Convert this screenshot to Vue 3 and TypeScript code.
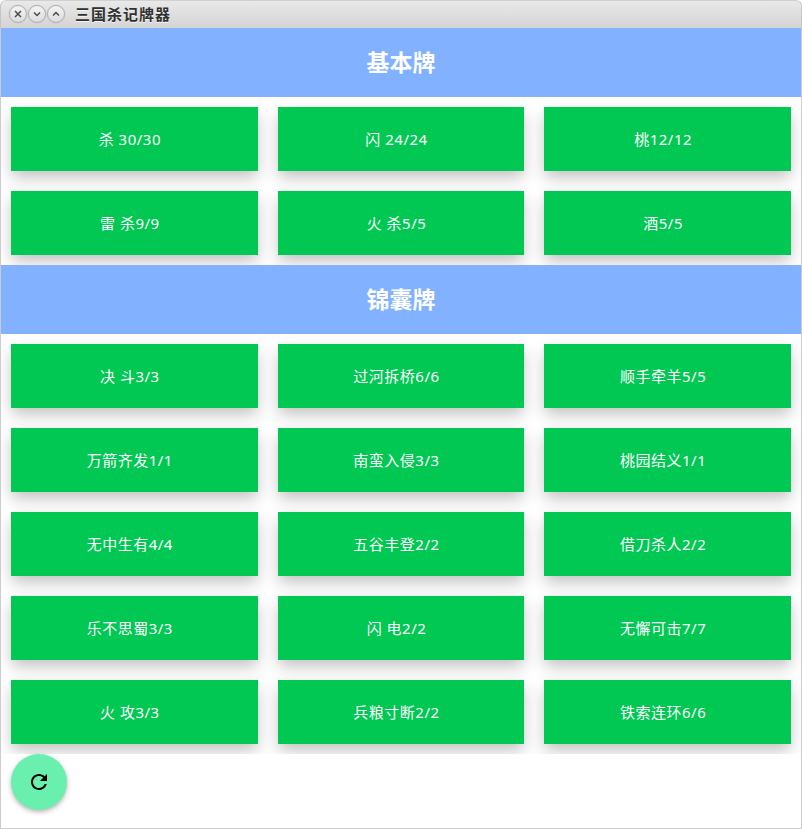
<script setup lang="ts">
import { ref } from 'vue'

interface Card {
  name: string
  total: number
  left: number
}

interface Section {
  title: string
  cards: Card[]
}

const deck: [string, [string, number][]][] = [
  ['基本牌', [['杀 ', 30], ['闪 ', 24], ['桃', 12], ['雷 杀', 9], ['火 杀', 5], ['酒', 5]]],
  ['锦囊牌', [
    ['决 斗', 3], ['过河拆桥', 6], ['顺手牵羊', 5],
    ['万箭齐发', 1], ['南蛮入侵', 3], ['桃园结义', 1],
    ['无中生有', 4], ['五谷丰登', 2], ['借刀杀人', 2],
    ['乐不思蜀', 3], ['闪 电', 2], ['无懈可击', 7],
    ['火 攻', 3], ['兵粮寸断', 2], ['铁索连环', 6],
  ]],
]

const freshDeck = (): Section[] =>
  deck.map(([title, cards]) => ({
    title,
    cards: cards.map(([name, total]) => ({ name, total, left: total })),
  }))

const sections = ref<Section[]>(freshDeck())

function draw(card: Card) {
  if (card.left > 0) card.left--
}

function reset() {
  sections.value = freshDeck()
}
</script>

<template>
  <div class="window">
    <header class="titlebar">
      <button class="control" type="button" aria-label="关闭">
        <svg viewBox="0 0 16 16"><path d="M5 5l6 6M11 5l-6 6" /></svg>
      </button>
      <button class="control" type="button" aria-label="最小化">
        <svg viewBox="0 0 16 16"><path d="M5 6.5l3 3 3-3" /></svg>
      </button>
      <button class="control" type="button" aria-label="最大化">
        <svg viewBox="0 0 16 16"><path d="M5 9.5l3-3 3 3" /></svg>
      </button>
      <span class="caption">三国杀记牌器</span>
    </header>
    <main class="content">
      <section v-for="section in sections" :key="section.title" class="section">
        <h2 class="heading">{{ section.title }}</h2>
        <div class="grid">
          <button
            v-for="card in section.cards"
            :key="card.name"
            class="card"
            type="button"
            @click="draw(card)"
          >{{ card.name }}{{ card.left }}/{{ card.total }}</button>
        </div>
      </section>
      <button class="fab" type="button" aria-label="重置" @click="reset">
        <svg viewBox="0 0 24 24">
          <path d="M17.65 6.35C16.2 4.9 14.21 4 12 4c-4.42 0-7.99 3.58-7.99 8s3.57 8 7.99 8c3.73 0 6.84-2.55 7.73-6h-2.08c-.82 2.33-3.04 4-5.65 4-3.31 0-6-2.69-6-6s2.69-6 6-6c1.66 0 3.14.69 4.22 1.78L13 11h7V4l-2.35 2.35z" />
        </svg>
      </button>
    </main>
  </div>
</template>

<style>
body {
  margin: 0;
  background: #fff;
}
</style>

<style scoped>
.window {
  min-height: 100vh;
  display: flex;
  flex-direction: column;
  box-sizing: border-box;
  font-family: "Noto Sans", "Noto Sans CJK SC", sans-serif;
}

.titlebar {
  height: 28px;
  box-sizing: border-box;
  display: flex;
  align-items: center;
  gap: 1px;
  padding: 0 8px 1px;
  border-left: 1px solid #c4c4c4;
  border-right: 1px solid #c4c4c4;
  border-top: 1px solid #d0d0d0;
  border-radius: 6px 6px 0 0;
  background: linear-gradient(#e9e9e9, #d4d4d4);
}

.control {
  width: 18px;
  height: 18px;
  padding: 0;
  box-sizing: border-box;
  border: 1px solid #b0b0b0;
  border-radius: 50%;
  background: linear-gradient(#f4f4f4, #dcdcdc);
  box-shadow: 0 0 1px #a8a8a8;
}

.control svg {
  display: block;
  width: 16px;
  height: 16px;
  fill: none;
  stroke: #4a4a4a;
  stroke-width: 1.5;
}

.caption {
  margin-left: 9px;
  font-size: 15px;
  line-height: 20px;
  font-weight: 700;
  letter-spacing: 1px;
  color: #303030;
  text-shadow: 0 1px 0 #f4f4f4;
}

.content {
  flex: 1;
  border: 1px solid #ccc;
  border-top: 0;
}

.section {
  overflow: hidden;
}

.heading {
  margin: 0;
  padding: 18px 0;
  background: #82b1ff;
  color: #fff;
  font-size: 23px;
  line-height: 33px;
  font-weight: 700;
  text-align: center;
}

.grid {
  display: grid;
  grid-template-columns: repeat(3, 1fr);
  gap: 20px;
  padding: 10px;
}

.card {
  height: 64px;
  padding: 0 9px 0 0;
  border: 0;
  background: #00c853;
  box-shadow: 0 7px 15px -1px rgba(0, 0, 0, 0.25);
  color: #fff;
  font-family: inherit;
  font-size: 15px;
  line-height: 22px;
  letter-spacing: 0.5px;
  text-align: center;
}

.fab {
  display: flex;
  align-items: center;
  justify-content: center;
  width: 56px;
  height: 56px;
  margin: 0 10px 18px;
  padding: 0;
  border: 0;
  border-radius: 50%;
  background: #69f0ae;
  box-shadow: 0 2px 5px 0 rgba(0, 0, 0, 0.3);
}

.fab svg {
  width: 24px;
  height: 24px;
  fill: #000;
}
</style>
